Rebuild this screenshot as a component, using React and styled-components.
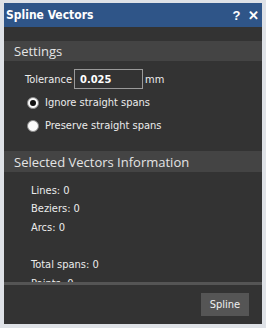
import styled, { createGlobalStyle } from "styled-components";

const Global = createGlobalStyle`
  html, body { margin: 0; padding: 0; background: #dfe2e7; }
  * { box-sizing: border-box; }
`;

const Frame = styled.div`
  width: 266px;
  height: 328px;
  border: 4px solid #dfe2e7;
  border-top-width: 3px;
  background: #333333;
  display: flex;
  flex-direction: column;
  font-family: "DejaVu Sans Condensed", "DejaVu Sans", sans-serif;
  color: #ececec;
  overflow: hidden;
`;

const TitleBar = styled.div`
  height: 24px;
  background: #2f5588;
  display: flex;
  align-items: center;
  padding: 0 0 0 2px;
  font-weight: bold;
  font-size: 12px;
  color: #fff;
`;

const Title = styled.span`
  flex: 1;
`;

const TitleButton = styled.span`
  width: 17px;
  text-align: center;
  font-size: 13px;
  font-family: "Liberation Sans", sans-serif;
`;

const Spacer = styled.div`
  height: 14px;
  flex-shrink: 0;
`;

const SectionHeader = styled.div`
  height: ${(p) => p.h}px;
  flex-shrink: 0;
  background: #444444;
  display: flex;
  align-items: center;
  padding-left: 10px;
  font-family: "Open Sans", "Liberation Sans", sans-serif;
  font-size: 13px;
  color: #e4e4e4;
`;

const SettingsBody = styled.div`
  height: 90px;
  flex-shrink: 0;
  padding: 8px 0 0 21px;
  display: flex;
  flex-direction: column;
  font-size: 11px;
`;

const Row = styled.div`
  display: flex;
  align-items: center;
  height: ${(p) => p.h}px;
  gap: 2px;
`;

const Input = styled.div`
  width: 69px;
  height: 20px;
  border: 1px solid #9a9a9a;
  display: flex;
  align-items: center;
  padding-left: 5px;
  font-weight: bold;
  color: #fff;
`;

const Radio = styled.span`
  width: 12px;
  height: 12px;
  border-radius: 50%;
  background: #fafafa;
  border: 1px solid #888;
  margin: 0 4px 0 2px;
  display: flex;
  align-items: center;
  justify-content: center;
  &::after {
    content: "";
    width: 6px;
    height: 6px;
    border-radius: 50%;
    background: ${(p) => (p.checked ? "#111" : "transparent")};
  }
`;

const InfoList = styled.div`
  flex: 1;
  overflow: hidden;
  padding: 9px 0 0 27px;
  font-size: 11px;
  display: flex;
  flex-direction: column;
`;

const InfoLine = styled.div`
  height: ${(p) => p.h || 18.5}px;
  display: flex;
  align-items: center;
  flex-shrink: 0;
`;

const Separator = styled.div`
  height: 3px;
  flex-shrink: 0;
  background: #555555;
`;

const Footer = styled.div`
  height: 39px;
  flex-shrink: 0;
  display: flex;
  justify-content: flex-end;
  align-items: flex-start;
  padding: 8px 13px 0 0;
`;

const Button = styled.button`
  width: 48px;
  height: 23px;
  background: #555555;
  border: none;
  color: #f0f0f0;
  font-family: "DejaVu Sans Condensed", "DejaVu Sans", sans-serif;
  font-size: 11px;
  padding: 0;
`;

export default function App() {
  return (
    <>
      <Global />
      <Frame>
        <TitleBar>
          <Title>Spline Vectors</Title>
          <TitleButton>?</TitleButton>
          <TitleButton>✕</TitleButton>
        </TitleBar>
        <Spacer />
        <SectionHeader h={20}>Settings</SectionHeader>
        <SettingsBody>
          <Row h={20}>
            <span>Tolerance</span>
            <Input>0.025</Input>
            <span>mm</span>
          </Row>
          <Row h={23} style={{ marginTop: 2 }}>
            <Radio checked />
            <span>Ignore straight spans</span>
          </Row>
          <Row h={23}>
            <Radio />
            <span>Preserve straight spans</span>
          </Row>
        </SettingsBody>
        <SectionHeader h={21}>Selected Vectors Information</SectionHeader>
        <InfoList>
          <InfoLine>Lines: 0</InfoLine>
          <InfoLine>Beziers: 0</InfoLine>
          <InfoLine>Arcs: 0</InfoLine>
          <InfoLine h={19} />
          <InfoLine>Total spans: 0</InfoLine>
          <InfoLine>Points: 0</InfoLine>
        </InfoList>
        <Separator />
        <Footer>
          <Button>Spline</Button>
        </Footer>
      </Frame>
    </>
  );
}
